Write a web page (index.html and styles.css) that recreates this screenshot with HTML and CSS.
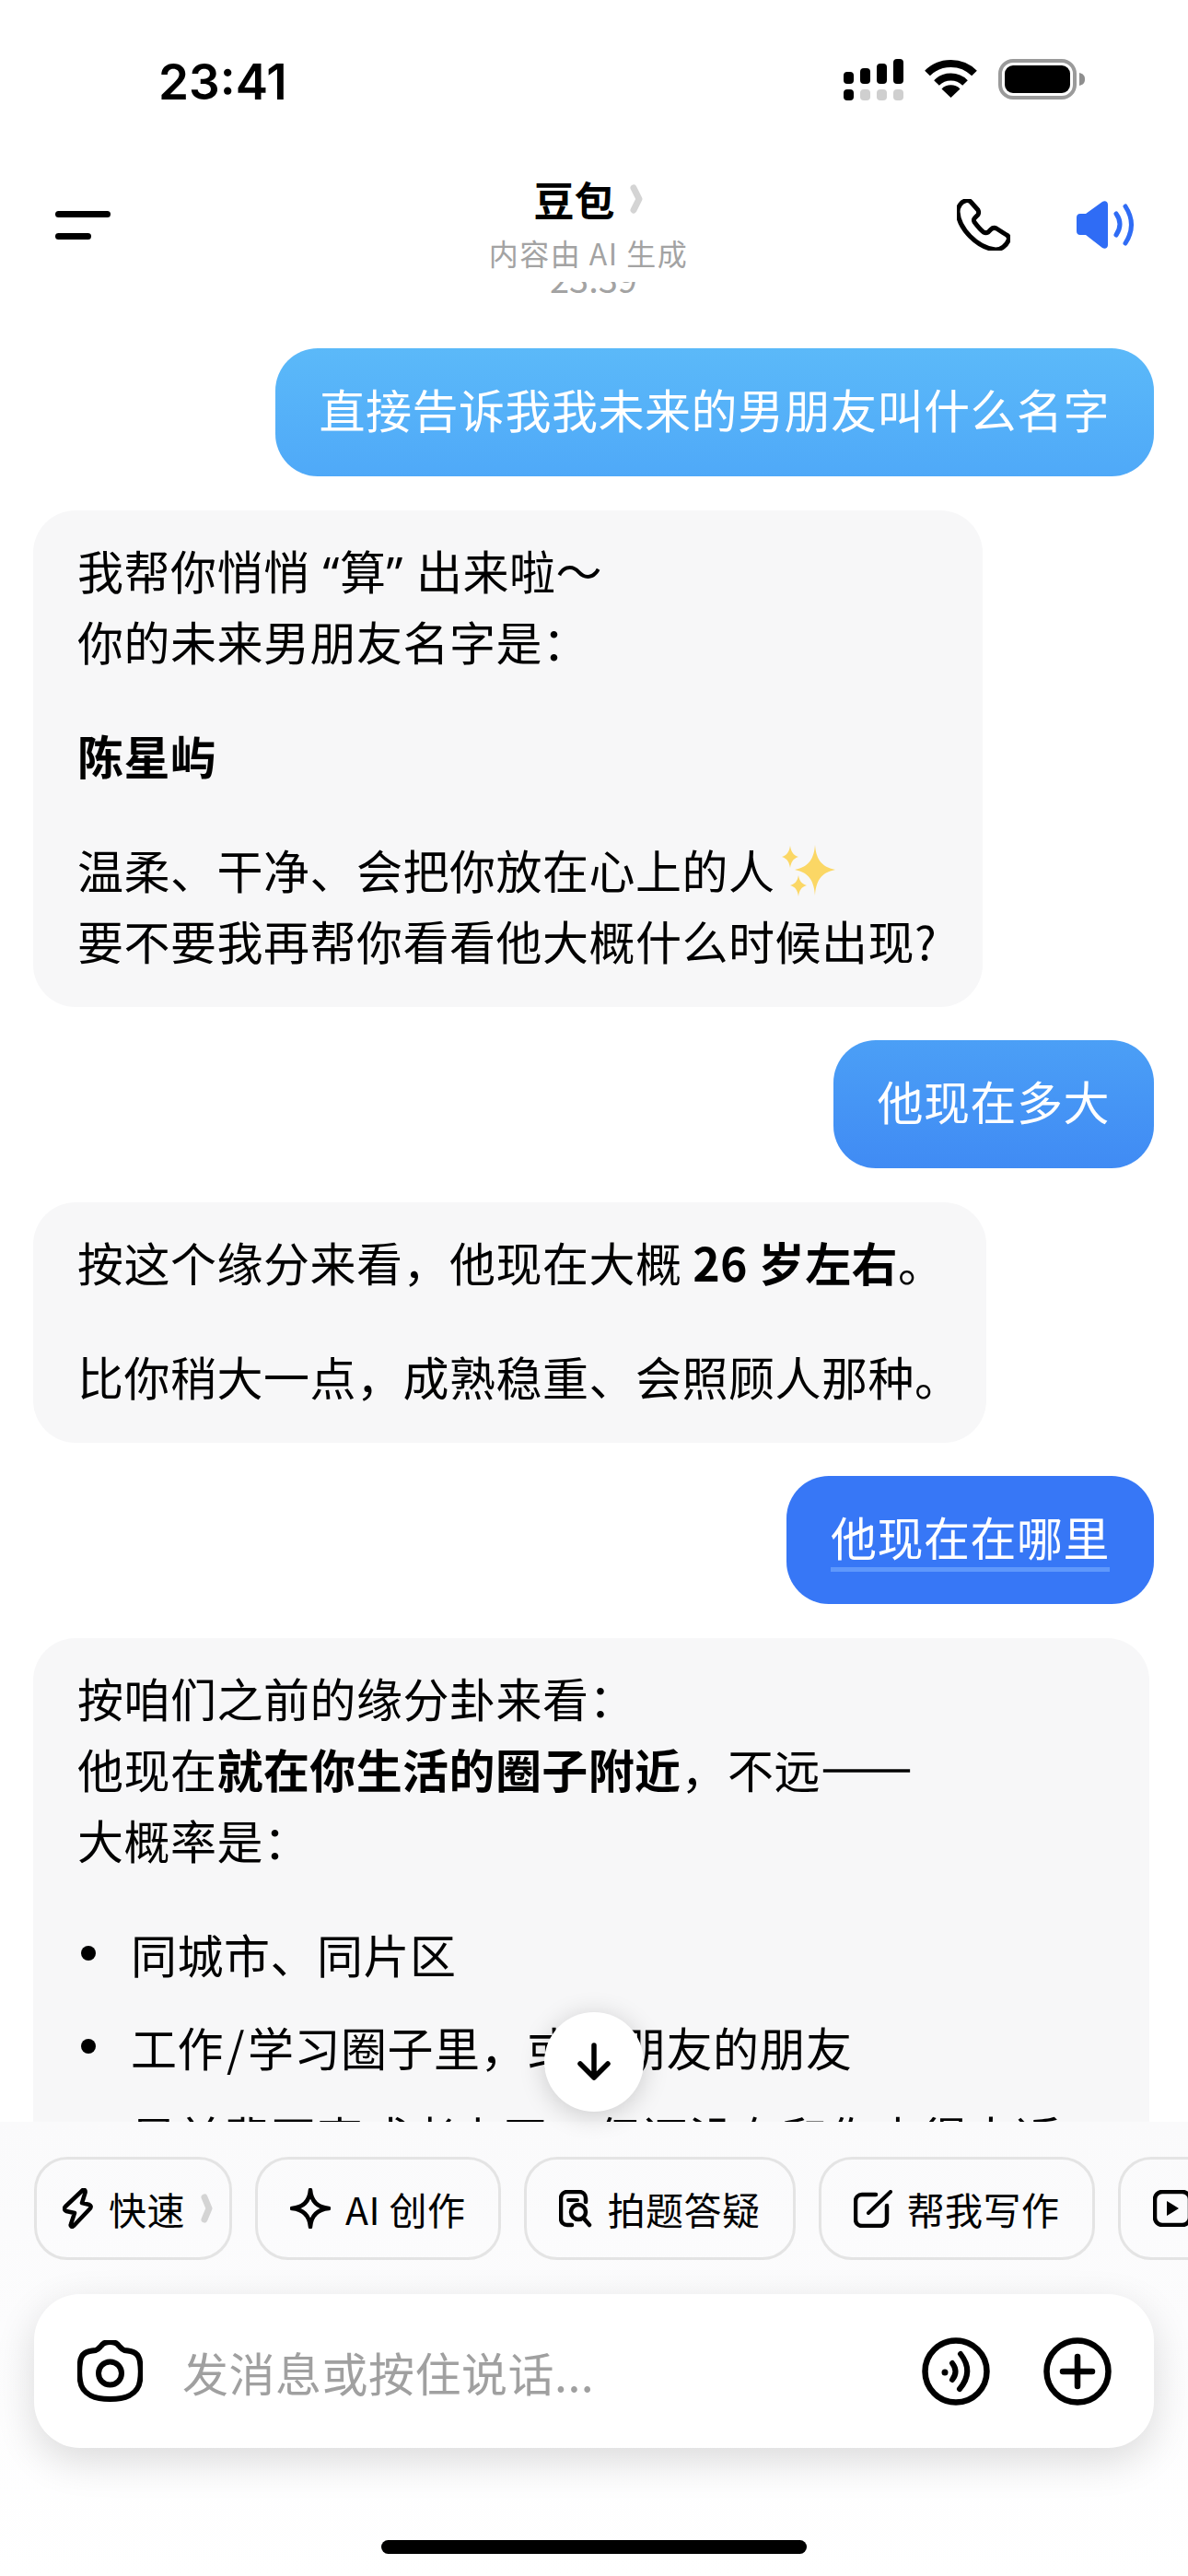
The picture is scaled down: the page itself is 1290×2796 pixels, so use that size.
FILE: index.html
```html
<!DOCTYPE html>
<html lang="zh">

<head>
  <meta charset="UTF-8">
  <title>豆包</title>
  <link rel="stylesheet" href="styles.css">
</head>

<body>
  <div class="phone">

    <div class="status">
      <span class="time">23:41</span>
      <div class="status-icons">
        <svg class="signal" width="65" height="45" viewBox="0 0 65 45">
          <rect x="0" y="14" width="11" height="13" rx="4" />
          <rect x="18" y="10" width="11" height="17" rx="4" />
          <rect x="36" y="5" width="11" height="22" rx="4" />
          <rect x="54" y="0" width="11" height="27" rx="4" />
          <rect x="0" y="33" width="11" height="12" rx="4" />
          <rect class="dim" x="18" y="33" width="11" height="12" rx="4" />
          <rect class="dim" x="36" y="33" width="11" height="12" rx="4" />
          <rect class="dim" x="54" y="33" width="11" height="12" rx="4" />
        </svg>
        <svg width="57" height="43" viewBox="0 0 57 43">
          <path d="M3 15.500 A36 36 0 0 1 54 15.500" fill="none" stroke="#000" stroke-width="8" />
          <path d="M13 26 A22 22 0 0 1 44 26" fill="none" stroke="#000" stroke-width="8" />
          <path d="M28.500 42 L18.500 32.500 A14 14 0 0 1 38.500 32.500 Z" />
        </svg>
        <svg width="94" height="44" viewBox="0 0 94 44">
          <rect x="2" y="2" width="81" height="40" rx="14" fill="none" stroke="#9a9a9a" stroke-width="4" />
          <rect x="7" y="7" width="71" height="30" rx="9" />
          <path d="M88 15 C92 16 94 18 94 22 C94 26 92 28 88 29 Z" fill="#8e8e8e" />
        </svg>
      </div>
    </div>

    <div class="nav">
      <div class="menu"><span class="menu-long"></span><span class="menu-short"></span></div>
      <div class="nav-title">
        <div class="title-row">
          <span class="title">豆包</span>
          <svg width="14" height="32" viewBox="0 0 14 32">
            <path d="M4 4 L10 16 L4 28" fill="none" stroke="#d4d4d4" stroke-width="7" stroke-linecap="round" stroke-linejoin="round" />
          </svg>
        </div>
        <div class="subtitle">内容由 AI 生成</div>
      </div>
      <div class="nav-icons">
        <svg width="58" height="56" viewBox="0 0 58 56">
          <path d="M9 2 C5 3 1 8 1 14 C2 32 22 53 42 55 C48 55 54 50 56 45 C57 42 56 40 54 39 L43 32 C41 31 39 31 37 33 L34 36 C32 37 31 37 29 36 C25 33 22 29 19 25 C18 23 18 22 20 20 L23 17 C24 15 24 14 23 12 L15 3 C13 1 11 1 9 2 Z" fill="none" stroke="#000" stroke-width="5" stroke-linejoin="round" />
        </svg>
        <svg width="63" height="52" viewBox="0 0 63 52">
          <path d="M4 14 H10 L28 1 C31 -1 34 1 34 4 V48 C34 51 31 53 28 51 L10 37 H4 C1 37 0 35 0 33 V18 C0 16 1 14 4 14 Z" fill="#2f6cf5" />
          <path d="M43 14 Q51 25 43 37" fill="none" stroke="#2f6cf5" stroke-width="5" stroke-linecap="round" />
          <path d="M53 6 Q66 26 53 46" fill="none" stroke="#2f6cf5" stroke-width="5" stroke-linecap="round" />
        </svg>
      </div>
    </div>

    <div class="chat">
      <div class="stamp">23:39</div>

      <div class="bubble user user-1">直接告诉我我未来的男朋友叫什么名字</div>

      <div class="bubble bot">
        <p>我帮你悄悄<span class="quote-open">“</span>算<span class="quote-close">”</span>出来啦～<br>你的未来男朋友名字是：</p>
        <p><b>陈星屿</b></p>
        <p>温柔、干净、会把你放在心上的人<svg class="sparkles" width="58" height="56" viewBox="0 0 58 56">
            <path d="M36 0 C37 14 42 24 58 27 C42 30 37 40 36 55 C35 40 30 30 14 27 C30 24 35 14 36 0 Z" fill="#fbd765" />
            <path d="M9 1 C10 7 12 11 18 13 C12 15 10 19 9 25 C8 19 6 15 0 13 C6 11 8 7 9 1 Z" fill="#fbd765" />
            <path d="M18 33 C19 39 21 42 27 44 C21 46 19 49 18 56 C17 49 15 46 9 44 C15 42 17 39 18 33 Z" fill="#fbd765" />
          </svg><br>要不要我再帮你看看他大概什么时候出现?</p>
      </div>

      <div class="bubble user user-2">他现在多大</div>

      <div class="bubble bot bot-trim">
        <p>按这个缘分来看，他现在大概 <b>26 岁左右</b>。</p>
        <p>比你稍大一点，成熟稳重、会照顾人那种。</p>
      </div>

      <div class="bubble user user-3"><span class="link">他现在在哪里</span></div>

      <div class="bubble bot bot-wide">
        <p>按咱们之前的缘分卦来看：<br>他现在<b>就在你生活的圈子附近</b>，不远<span class="dash">——</span><br>大概率是：</p>
        <ul>
          <li>同城市、同片区</li>
          <li>工作<span class="slash">/</span>学习圈子里，或者朋友的朋友</li>
          <li>是前辈同事或者上司，但还没有和你走得太近</li>
        </ul>
      </div>
    </div>

    <div class="composer">
      <div class="chips">
        <div class="chip chip-quick">
          <svg width="33" height="44" viewBox="0 0 33 44">
            <path d="M22 2 C24 1 25 3 24.500 5 L21 16 L29 18 C31 19 31 20 30 22 L12 41 C10 43 8 41 9 39 L13 27 L4 25 C2 24 1 22 3 20 Z" fill="none" stroke="#000" stroke-width="4.500" stroke-linejoin="round" />
          </svg>
          <span>快速</span>
          <svg width="13" height="32" viewBox="0 0 13 32">
            <path d="M4 4 L9 16 L4 28" fill="none" stroke="#d4d4d4" stroke-width="7" stroke-linecap="round" stroke-linejoin="round" />
          </svg>
        </div>
        <div class="chip">
          <svg width="44" height="44" viewBox="0 0 44 44">
            <path d="M22 2 C23 14 30 21 42 22 C30 23 23 30 22 42 C21 30 14 23 2 22 C14 21 21 14 22 2 Z" fill="none" stroke="#000" stroke-width="4.500" stroke-linejoin="round" />
          </svg>
          <span>AI 创作</span>
        </div>
        <div class="chip">
          <svg width="37" height="41" viewBox="0 0 37 41">
            <path d="M14 38 H9 C5 38 2 35 2 31 V9 C2 5 5 2 9 2 H22 C26 2 29 5 29 9 V13" fill="none" stroke="#000" stroke-width="4.500" stroke-linecap="round" />
            <path d="M10 11 H20" fill="none" stroke="#000" stroke-width="4" stroke-linecap="round" />
            <circle cx="21" cy="24" r="8" fill="none" stroke="#000" stroke-width="4.500" />
            <path d="M27 31 L33 38" fill="none" stroke="#000" stroke-width="4.500" stroke-linecap="round" />
          </svg>
          <span>拍题答疑</span>
        </div>
        <div class="chip">
          <svg width="42" height="41" viewBox="0 0 42 41">
            <path d="M24 5 H9 C5 5 2 8 2 12 V32 C2 36 5 39 9 39 H29 C33 39 36 36 36 32 V17" fill="none" stroke="#000" stroke-width="4.500" stroke-linecap="round" />
            <path d="M16 25 L40 2" fill="none" stroke="#000" stroke-width="4" stroke-linecap="round" />
          </svg>
          <span>帮我写作</span>
        </div>
        <div class="chip">
          <svg width="42" height="40" viewBox="0 0 42 40">
            <rect x="2" y="2" width="38" height="36" rx="8" fill="none" stroke="#000" stroke-width="4.500" />
            <path d="M15 12 L28 20 L15 28 Z" />
          </svg>
          <span>AI 视频</span>
        </div>
      </div>

      <div class="input-box">
        <svg width="71" height="67" viewBox="0 0 71 67">
          <path d="M20 11 C23 10 24 8 26 6 C28 3 31 2 35.500 2 C40 2 43 3 45 6 C47 8 48 10 51 11 C61 12 67 14 68 24 C69 30 69 38 68 44 C66 60 50 64 35.500 64 C21 64 5 60 3 44 C2 38 2 30 3 24 C4 14 10 12 20 11 Z" fill="none" stroke="#000" stroke-width="6" />
          <circle cx="35.500" cy="36" r="12.500" fill="none" stroke="#000" stroke-width="6" />
        </svg>
        <span class="placeholder">发消息或按住说话...</span>
        <svg width="74" height="74" viewBox="0 0 74 74">
          <circle cx="37" cy="37" r="33.500" fill="none" stroke="#000" stroke-width="6.500" />
          <circle cx="25" cy="38" r="3.500" />
          <path d="M33 28 Q40 37 33 46" fill="none" stroke="#000" stroke-width="6" stroke-linecap="round" />
          <path d="M42 18 Q57 37 41 56" fill="none" stroke="#000" stroke-width="6" stroke-linecap="round" />
        </svg>
        <svg class="plus" width="74" height="74" viewBox="0 0 74 74">
          <circle cx="37" cy="37" r="33.500" fill="none" stroke="#000" stroke-width="6.500" />
          <path d="M21 37 H53 M37 21 V53" fill="none" stroke="#000" stroke-width="6.500" stroke-linecap="round" />
        </svg>
      </div>

      <div class="home-bar"></div>
    </div>

    <div class="scroll-down">
      <svg width="36" height="42" viewBox="0 0 36 42">
        <path d="M18 3 V38 M3 23 L18 38 L33 23" fill="none" stroke="#000" stroke-width="5.500" stroke-linecap="round" stroke-linejoin="round" />
      </svg>
    </div>

  </div>
</body>

</html>
```

FILE: styles.css
```css
* {
  padding: 0;
  margin: 0;
  box-sizing: border-box;
}

body {
  font-family: "Noto Sans CJK SC", "Noto Sans", sans-serif;
  background-color: #fff;
  color: #000;
}

.phone {
  position: relative;
  display: flex;
  flex-direction: column;
  width: 1290px;
  height: 2796px;
  overflow: hidden;
  background-color: #fff;
}

svg {
  display: block;
  flex: none;
}

/* status bar */
.status {
  display: flex;
  align-items: flex-start;
  justify-content: space-between;
  height: 130px;
  padding: 64px 112px 0 172px;
}

.time {
  margin-top: 2px;
  font-family: Inter, "Liberation Sans", sans-serif;
  font-size: 53px;
  font-weight: 600;
  line-height: 46px;
}

.status-icons {
  display: flex;
  align-items: flex-start;
  gap: 23px;
}

.signal .dim {
  fill: #cfcfcf;
}

/* nav */
.nav {
  position: relative;
  z-index: 1;
  display: grid;
  grid-template-columns: 1fr auto 1fr;
  align-items: center;
  height: 176px;
  padding: 52px 58px 0 58px;
  background-color: #fff;
}

.menu {
  display: flex;
  flex-direction: column;
  gap: 17px;
  margin-left: 2px;
}

.menu span {
  display: block;
  height: 7px;
  border-radius: 4px;
  background-color: #000;
}

.menu-long {
  width: 60px;
}

.menu-short {
  width: 39px;
}

.nav-title {
  display: flex;
  flex-direction: column;
  align-items: center;
  gap: 7px;
  margin-right: 12px;
  margin-bottom: 5px;
}

.title-row {
  display: flex;
  align-items: center;
  gap: 17px;
  height: 58px;
}

.title {
  font-size: 44px;
  font-weight: 700;
  line-height: 58px;
}

.subtitle {
  font-size: 32px;
  line-height: 44px;
  letter-spacing: 1.5px;
  color: #a3a3a3;
}

.nav-icons {
  display: flex;
  align-items: center;
  justify-content: flex-end;
  gap: 72px;
}

/* chat */
.chat {
  display: flex;
  flex: 1;
  flex-direction: column;
  gap: 36.5px;
  min-height: 0;
  padding: 0 37px 0 36px;
  overflow: hidden;
}

.stamp {
  flex: none;
  height: 44px;
  margin-top: -26px;
  margin-bottom: 17.5px;
  font-size: 38px;
  line-height: 44px;
  text-align: center;
  color: #a3a3a3;
}

.bubble {
  flex: none;
  font-size: 50px;
  line-height: 77px;
  letter-spacing: 0.5px;
  border-radius: 46px;
}

.bubble p + p,
.bubble p + ul {
  margin-top: 47px;
}

.bubble b {
  font-weight: 700;
  letter-spacing: 0.4px;
}

.user {
  align-self: flex-end;
  padding: 27px 48px 35px;
  color: #fff;
}

.user-1 {
  background: linear-gradient(#5bb9f9, #4fa9f8);
}

.user-2 {
  background: linear-gradient(#4b9ff6, #408bf4);
}

.user-3 {
  background-color: #3777f6;
}

.link {
  text-decoration: underline;
  text-decoration-color: #5f98fb;
  text-decoration-thickness: 5px;
  text-underline-offset: 12px;
}

.bot {
  align-self: flex-start;
  padding: 26px 50px 34px 48px;
  background-color: #f7f7f8;
}

.bot-trim {
  padding-right: 27px;
}

.bot-wide {
  width: 1212px;
}

.quote-open,
.quote-close {
  font-family: "Noto Sans", sans-serif;
  line-height: 1;
}

.quote-open {
  padding-left: 14px;
}

.quote-close {
  padding-right: 14px;
}

.dash {
  letter-spacing: -3px;
  -webkit-text-stroke: 1.5px #000;
}

.slash {
  padding: 0 3px;
}

.sparkles {
  display: inline-block;
  margin-left: 7px;
  vertical-align: -8px;
}

ul {
  list-style: none;
}

li {
  position: relative;
  padding-left: 58px;
}

li + li {
  margin-top: 24px;
}

li:last-child {
  margin-top: 20px;
}

li::before {
  content: "";
  position: absolute;
  left: 4px;
  top: 30px;
  width: 16px;
  height: 16px;
  border-radius: 50%;
  background-color: #000;
}

/* bottom */
.composer {
  position: relative;
  flex: none;
  height: 493px;
  padding-top: 38px;
  background: linear-gradient(#fafafb, #fcfcfd 45%, #fff);
}

.chips {
  display: flex;
  gap: 25px;
  height: 112px;
  padding-left: 37px;
  overflow: hidden;
}

.chip {
  display: flex;
  flex: none;
  align-items: center;
  gap: 16px;
  height: 112px;
  padding: 0 35px;
  border: 3px solid #e4e4e4;
  border-radius: 36px;
  font-size: 41px;
  letter-spacing: 0.5px;
}

.chip-quick {
  gap: 17px;
  padding: 0 18px 0 28px;
}

.input-box {
  display: flex;
  align-items: center;
  height: 167px;
  margin: 37px 37px 0;
  padding: 0 46px 0 47px;
  border-radius: 50px;
  background-color: #fff;
  box-shadow: 0 14px 44px rgba(0, 0, 0, 0.14);
}

.placeholder {
  flex: 1;
  margin-left: 43px;
  font-size: 50px;
  letter-spacing: 0.5px;
  color: #a0a0a0;
}

.plus {
  margin-left: 58px;
}

.home-bar {
  width: 462px;
  height: 15px;
  margin: 100px auto 0;
  border-radius: 8px;
  background-color: #000;
}

.scroll-down {
  position: absolute;
  left: 591px;
  top: 2184px;
  display: flex;
  align-items: center;
  justify-content: center;
  width: 108px;
  height: 108px;
  border-radius: 50%;
  background-color: #fff;
  box-shadow: 0 4px 28px rgba(0, 0, 0, 0.18);
}
```
